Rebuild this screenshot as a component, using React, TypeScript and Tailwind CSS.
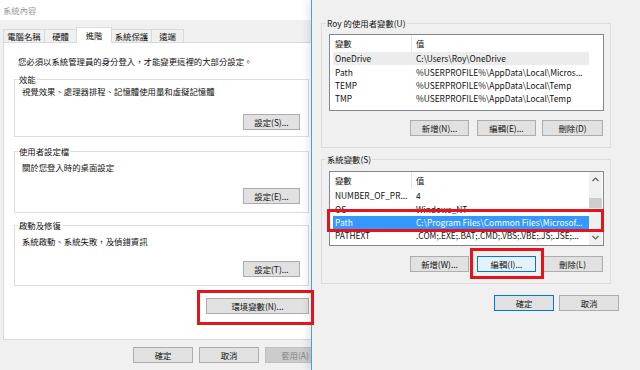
import clsx from "clsx";

type BtnKind = "normal" | "hover" | "default" | "disabled";

function Btn({ label, w, kind = "normal" }: { label: string; w: string; kind?: BtnKind }) {
  const tone =
    kind === "hover"
      ? "bg-[#e5f1fb] border-[#0078d7]"
      : kind === "default"
        ? "bg-[#e1e1e1] border-[#0078d7]"
        : kind === "disabled"
          ? "bg-[#cccccc] border-[#bfbfbf] text-[#838383]"
          : "bg-[#e1e1e1] border-[#adadad]";
  return (
    <div className={clsx("flex h-[16px] shrink-0 items-center justify-center border leading-none", w, tone)}>
      {label}
    </div>
  );
}

interface GroupProps {
  label: string;
  text: string;
  button: string;
  className: string;
  textClass: string;
  btnClass: string;
}

function Group({ label, text, button, className, textClass, btnClass }: GroupProps) {
  return (
    <fieldset className={clsx("w-[295px] border border-[#dcdcdc]", className)}>
      <legend className="ml-[3px] px-[1px] leading-[12px]">{label}</legend>
      <p className={clsx("pl-[7px] leading-[14px]", textClass)}>{text}</p>
      <div className={clsx("flex justify-end pr-[8px]", btnClass)}>
        <Btn label={button} w="w-[57px]" />
      </div>
    </fieldset>
  );
}

interface Row {
  name: string;
  value: string;
  state?: "hover" | "selected";
}

const USER_VARS: Row[] = [
  { name: "OneDrive", value: "C:\\Users\\Roy\\OneDrive", state: "hover" },
  { name: "Path", value: "%USERPROFILE%\\AppData\\Local\\Micros..." },
  { name: "TEMP", value: "%USERPROFILE%\\AppData\\Local\\Temp" },
  { name: "TMP", value: "%USERPROFILE%\\AppData\\Local\\Temp" },
];

const SYSTEM_VARS: Row[] = [
  { name: "NUMBER_OF_PR...", value: "4" },
  { name: "OS", value: "Windows_NT" },
  { name: "Path", value: "C:\\Program Files\\Common Files\\Microsof...", state: "selected" },
  { name: "PATHEXT", value: ".COM;.EXE;.BAT;.CMD;.VBS;.VBE;.JS;.JSE;..." },
];

function VarList({ rows, height, scroll }: { rows: Row[]; height: string; scroll?: boolean }) {
  return (
    <div className={clsx("ml-[7px] flex w-[275px] overflow-hidden border border-[#828790] bg-white", height)}>
      <div className="w-[259px] shrink-0 overflow-hidden">
        <div className="flex h-[17px] items-center">
          <div className="w-[82px] border-r border-[#e5e5e5] pl-[5px] leading-[17px]">變數</div>
          <div className="pl-[4px]">值</div>
        </div>
        {rows.map((r) => (
          <div
            key={r.name}
            className={clsx(
              "ml-[3px] flex h-[13.33px] w-[256px] items-center whitespace-nowrap",
              r.state === "hover" && "bg-[#ececec]",
              r.state === "selected" && "bg-[#3399ff] text-white",
            )}
          >
            <div className="w-[79px] shrink-0 overflow-hidden pl-[2px]">{r.name}</div>
            <div className="overflow-hidden pl-[4px]">{r.value}</div>
          </div>
        ))}
      </div>
      {scroll && (
        <div className="flex w-[13px] flex-col bg-[#f0f0f0]">
          <div className="flex h-[15px] items-center justify-center">
            <svg width="7" height="5" viewBox="0 0 7 5">
              <path d="M0.5 4L3.5 1L6.5 4" fill="none" stroke="#606060" strokeWidth="1.2" />
            </svg>
          </div>
          <div className="mt-[11px] h-[10px] bg-[#cdcdcd]" />
          <div className="flex-1" />
          <div className="flex h-[15px] items-center justify-center">
            <svg width="7" height="5" viewBox="0 0 7 5">
              <path d="M0.5 1L3.5 4L6.5 1" fill="none" stroke="#606060" strokeWidth="1.2" />
            </svg>
          </div>
        </div>
      )}
    </div>
  );
}

function SystemProperties() {
  const tabs = [
    { label: "電腦名稱", w: "w-[42px]" },
    { label: "硬體", w: "w-[33px]" },
    { label: "進階", w: "w-[36px]", active: true },
    { label: "系統保護", w: "w-[41px]" },
    { label: "遠端", w: "w-[33px]" },
  ];

  return (
    <div className="relative flex h-full w-[311px] shrink-0 flex-col overflow-hidden">
      <div className="flex h-[20px] items-center bg-white pl-[3px] text-[#9a9a9a]">系統內容</div>
      <div className="flex-1 bg-[#f0f0f0] pl-[3px] pt-[7px]">
        <div className="relative z-10 flex h-[15px] items-end">
          {tabs.map((t) =>
            t.active ? (
              <div
                key={t.label}
                className={clsx(
                  "mb-[-1px] -ml-px flex h-[16px] items-start justify-center border border-b-0 border-[#d9d9d9] bg-white pt-[1px]",
                  t.w,
                )}
              >
                {t.label}
              </div>
            ) : (
              <div
                key={t.label}
                className={clsx(
                  "-ml-px flex h-[13px] items-center justify-center border border-b-0 border-[#d9d9d9] bg-[#f0f0f0] first:ml-0",
                  t.w,
                )}
              >
                {t.label}
              </div>
            ),
          )}
        </div>
        <div className="flex h-[298px] w-[320px] flex-col border border-[#d9d9d9] bg-white px-[10px] pt-[11px]">
          <p className="pl-[4px] leading-[14px]">您必須以系統管理員的身分登入，才能變更這裡的大部分設定。</p>
          <Group
            label="效能"
            text="視覺效果、處理器排程、記憶體使用量和虛擬記憶體"
            button="設定(S)..."
            className="mt-[5px] pb-[6px]"
            textClass="mt-[-1px]"
            btnClass="mt-[16px]"
          />
          <Group
            label="使用者設定檔"
            text="關於您登入時的桌面設定"
            button="設定(E)..."
            className="mt-[8px] pb-[8px]"
            textClass="mt-[3px]"
            btnClass="mt-[14px]"
          />
          <Group
            label="啟動及修復"
            text="系統啟動、系統失敗，及偵錯資訊"
            button="設定(T)..."
            className="mt-[6px] pb-[8px]"
            textClass="mt-[3px]"
            btnClass="mt-[13px]"
          />
          <div className="mt-[12px] flex w-[295px] justify-end">
            <Btn label="環境變數(N)..." w="w-[103px]" />
          </div>
        </div>
        <div className="mt-[7px] flex gap-[6px] pl-[130px]">
          <Btn label="確定" w="w-[60px]" />
          <Btn label="取消" w="w-[60px]" />
          <Btn label="套用(A)" w="w-[60px]" kind="disabled" />
        </div>
      </div>
    </div>
  );
}

function EnvironmentVariables() {
  return (
    <div className="relative z-10 h-full flex-1 border-l border-[#4aa3c2] bg-[#f0f0f0] pl-[9px] pt-[17px] shadow-[-4px_0_6px_rgba(0,0,0,0.08)]">
      <fieldset className="w-[290px] border border-[#dcdcdc] pb-[11px]">
        <legend className="ml-[4px] px-[1px] leading-[12px]">Roy 的使用者變數(U)</legend>
        <div className="mt-[5px]">
          <VarList rows={USER_VARS} height="h-[77px]" />
        </div>
        <div className="ml-[88px] mt-[9px] flex">
          <Btn label="新增(N)..." w="w-[59px]" />
          <div className="ml-[8px]">
            <Btn label="編輯(E)..." w="w-[59px]" />
          </div>
          <div className="ml-[6px]">
            <Btn label="刪除(D)" w="w-[61px]" />
          </div>
        </div>
      </fieldset>
      <fieldset className="mt-[5px] w-[290px] border border-[#dcdcdc] pb-[11px]">
        <legend className="ml-[4px] px-[1px] leading-[12px]">系統變數(S)</legend>
        <div className="mt-[6px]">
          <VarList rows={SYSTEM_VARS} height="h-[75px]" scroll />
        </div>
        <div className="ml-[88px] mt-[10px] flex">
          <Btn label="新增(W)..." w="w-[59px]" />
          <div className="ml-[8px]">
            <Btn label="編輯(I)..." w="w-[59px]" kind="hover" />
          </div>
          <div className="ml-[6px]">
            <Btn label="刪除(L)" w="w-[61px]" />
          </div>
        </div>
      </fieldset>
      <div className="ml-[173px] mt-[11px] flex gap-[5px]">
        <Btn label="確定" w="w-[60px]" kind="default" />
        <Btn label="取消" w="w-[60px]" />
      </div>
    </div>
  );
}

export default function App() {
  return (
    <div className="relative flex h-[370px] w-[640px] overflow-hidden bg-[#f0f0f0] font-['Noto_Sans_CJK_TC',sans-serif] text-[8.4px] text-[#111]">
      <SystemProperties />
      <EnvironmentVariables />
      {/* red highlight frames drawn over the screenshot */}
      <div className="absolute left-[197px] top-[290px] z-20 h-[35px] w-[117px] border-[3px] border-[#e3141b]" />
      <div className="absolute left-[327px] top-[209px] z-20 h-[23px] w-[277px] border-[3px] border-[#e3141b]" />
      <div className="absolute left-[470px] top-[248px] z-20 h-[31px] w-[74px] border-[3px] border-[#e3141b]" />
    </div>
  );
}
